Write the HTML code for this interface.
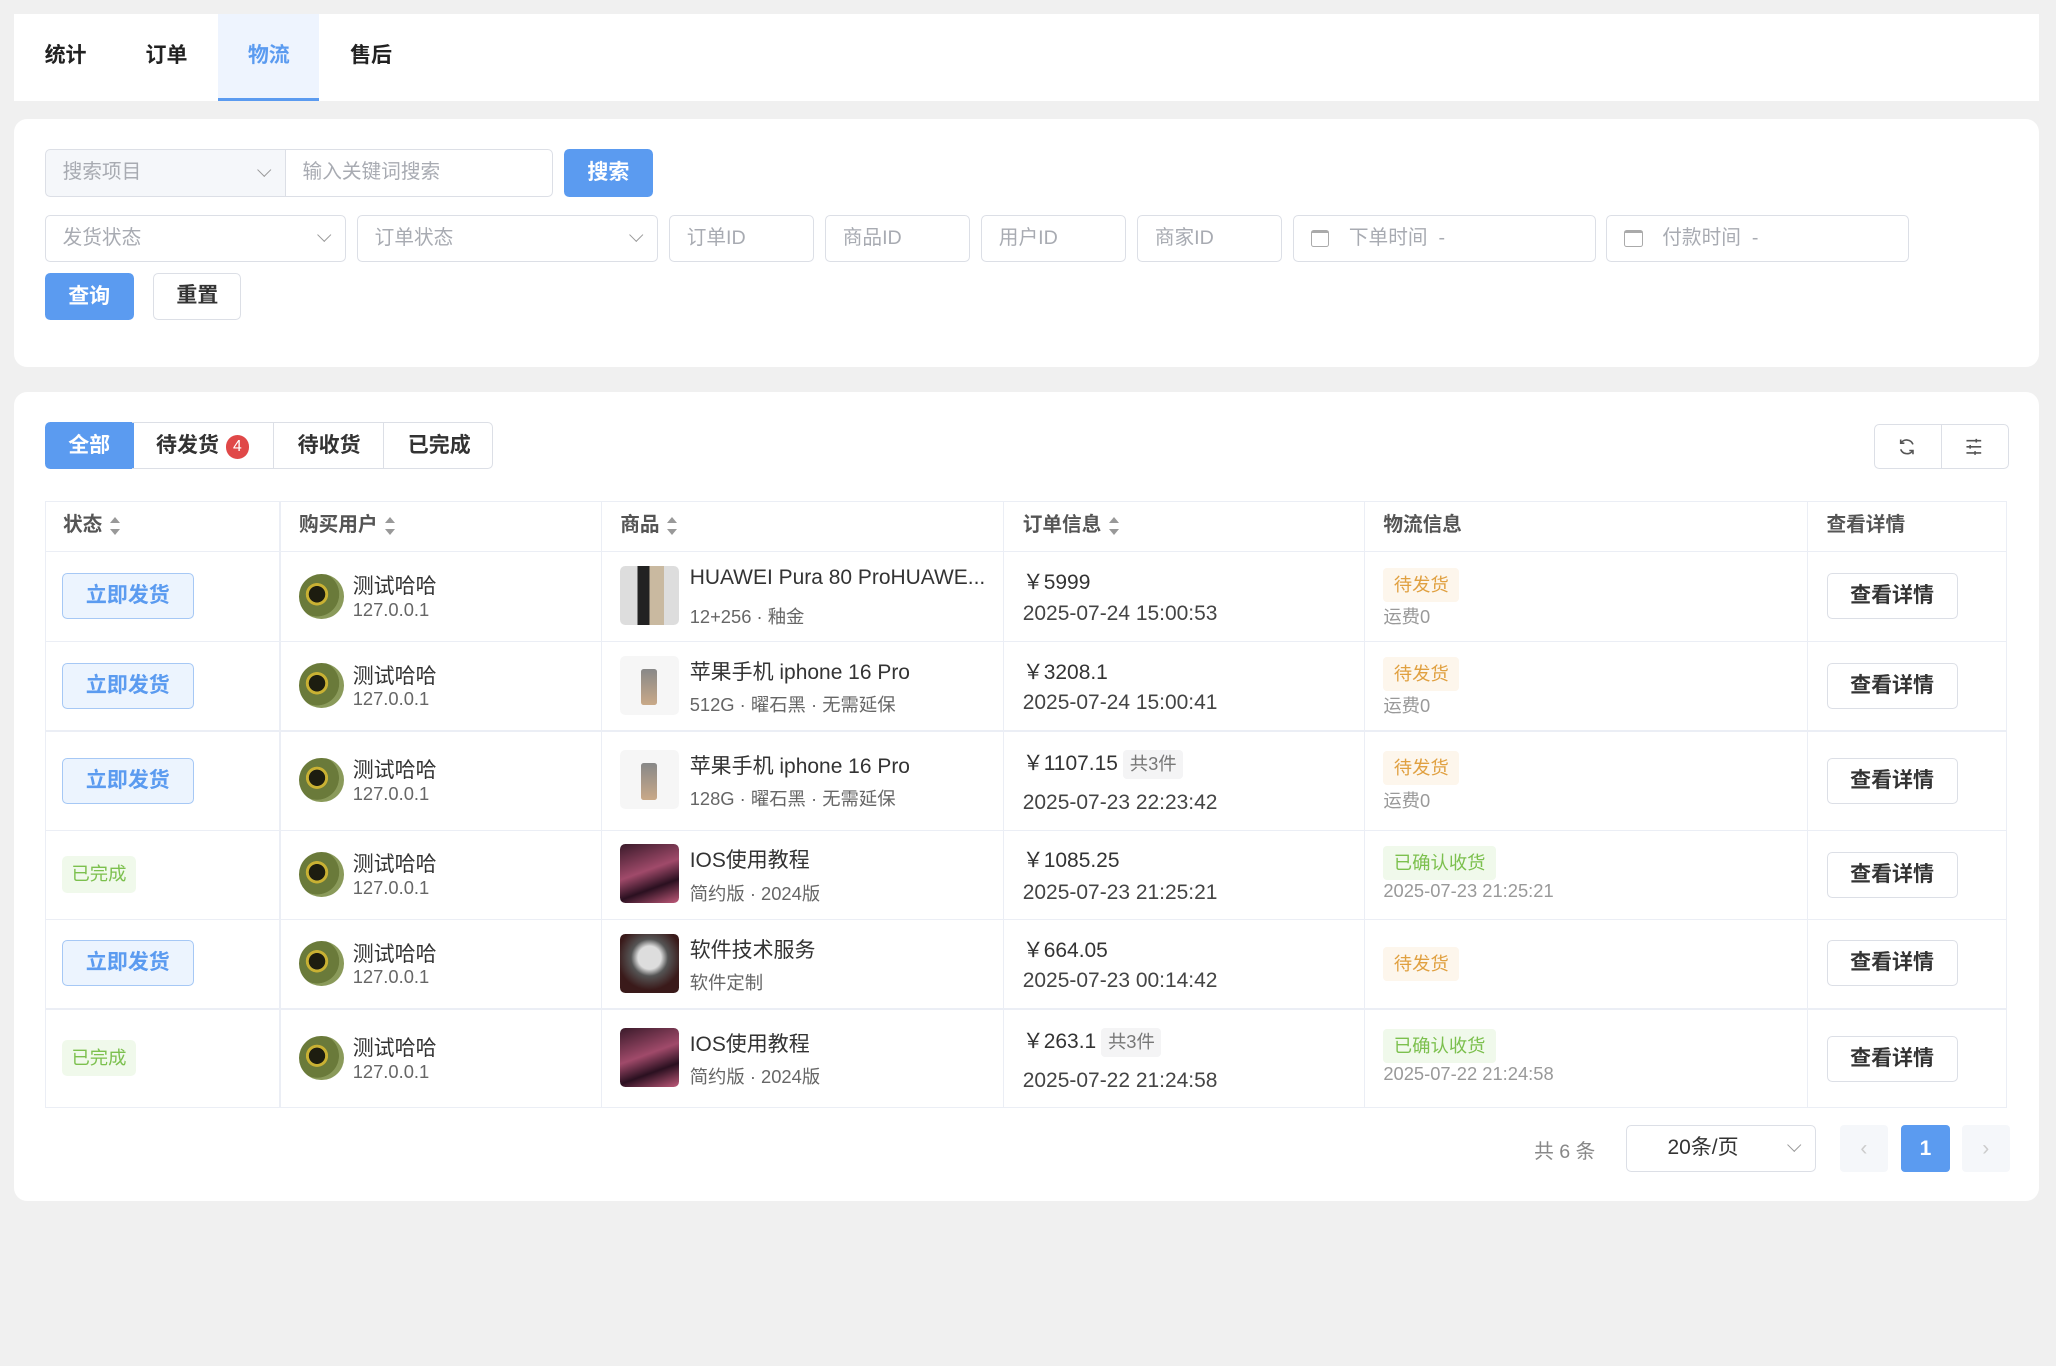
<!DOCTYPE html>
<html><head><meta charset="utf-8"><style>
*{box-sizing:border-box;margin:0;padding:0}
html,body{width:2056px;height:1366px;overflow:hidden;background:#f0f0f0}
#w{zoom:1.3112;width:1568px;height:1042px;position:relative;font-family:"Liberation Sans","Noto Sans CJK SC",sans-serif;color:#333}
.a{position:absolute}
.card{position:absolute;background:#fff;left:11px;width:1544px;border-radius:10px}
.tab{position:absolute;top:0;height:66px;line-height:64px;font-size:16px;font-weight:600;color:#222}
.inp{position:absolute;height:36px;border:1px solid #dcdfe6;border-radius:4px;font-size:15px;color:#a8abb2;line-height:34px;padding-left:13px;background:#fff}
.chev{position:absolute;right:12px;top:11px;width:8px;height:8px;border-right:1.3px solid #999;border-bottom:1.3px solid #999;transform:rotate(45deg)}
.btnp{position:absolute;background:#5b9bf0;color:#fff;border-radius:4px;font-size:16px;font-weight:600;text-align:center}
.btn{position:absolute;border:1px solid #dcdfe6;background:#fff;border-radius:4px;font-size:16px;font-weight:600;text-align:center;color:#333}
.th{position:absolute;top:382px;height:39px;line-height:38px;font-size:15px;font-weight:600;color:#555}
.sort{display:inline-block;vertical-align:middle;margin-left:6px;width:9px;height:14px;position:relative}
.sort:before{content:"";position:absolute;left:0;top:0;border:4.5px solid transparent;border-bottom:5px solid #999;border-top:0}
.sort:after{content:"";position:absolute;left:0;bottom:0;border:4.5px solid transparent;border-top:5px solid #999;border-bottom:0}
.hl{position:absolute;left:34px;width:1497px;height:1px;background:#ebeef5}
.vl{position:absolute;top:382px;height:463px;width:1px;background:#ebeef5}
.ship{position:absolute;left:47px;width:101px;height:35px;border:1px solid #a6c8f5;background:#ecf4fe;color:#5b9bf0;border-radius:4px;font-size:16px;font-weight:600;text-align:center;line-height:33px}
.done{position:absolute;left:47px;width:57px;height:28px;background:#f0f9eb;color:#7cc04e;border-radius:4px;font-size:14px;text-align:center;line-height:28px}
.av{position:absolute;left:228px;width:34px;height:34px;border-radius:50%;background:radial-gradient(circle at 40% 45%,#1d1d10 0 22%,#c9b133 23% 30%,#6a7a3a 31% 60%,#8a9a5a 61%)}
.un{position:absolute;left:269px;font-size:16px;color:#333}
.ip{position:absolute;left:269px;font-size:14px;color:#666}
.img{position:absolute;left:473px;width:45px;height:45px;border-radius:4px}
.pn{position:absolute;left:526px;font-size:16px;color:#333;white-space:nowrap}
.ps{position:absolute;left:526px;font-size:14px;color:#666;white-space:nowrap}
.pr{position:absolute;left:780px;font-size:16px;color:#333}
.cnt{display:inline-block;background:#f4f4f5;color:#777;font-size:14px;padding:0 5px;margin-left:4px;border-radius:3px;line-height:22px}
.dt{position:absolute;left:780px;font-size:16px;color:#444}
.tw{position:absolute;left:1055px;height:26px;line-height:26px;background:#fdf6ec;color:#e0a040;font-size:14px;padding:0 8px;border-radius:3px}
.tg{position:absolute;left:1055px;height:26px;line-height:26px;background:#f0f9eb;color:#7cc04e;font-size:14px;padding:0 8px;border-radius:3px}
.fs{position:absolute;left:1055px;font-size:14px;color:#999}
.det{position:absolute;left:1393px;width:100px;height:35px;border:1px solid #dcdfe6;border-radius:4px;font-size:16px;font-weight:600;text-align:center;line-height:33px;color:#333;background:#fff}
</style></head><body><div id="w">
<div class="card" style="top:11px;height:66px;border-radius:0">
<div class="tab" style="left:23px">统计</div>
<div class="tab" style="left:100px">订单</div>
<div class="a" style="left:155px;top:0;width:77px;height:66px;background:#eef4fe;border-bottom:3px solid #5b9bf0"></div>
<div class="tab" style="left:178px;color:#5b9bf0">物流</div>
<div class="tab" style="left:256px">售后</div>
</div>
<div class="card" style="top:91px;height:189px"></div>
<div class="inp" style="left:34px;top:114px;width:184px;background:#f5f7fa;border-radius:4px 0 0 4px">搜索项目<span class="chev"></span></div>
<div class="inp" style="left:217px;top:114px;width:205px;border-radius:0 4px 4px 0">输入关键词搜索</div>
<div class="btnp" style="left:430px;top:114px;width:68px;height:36px;line-height:36px">搜索</div>
<div class="inp" style="left:34px;top:164px;width:230px">发货状态<span class="chev"></span></div>
<div class="inp" style="left:272px;top:164px;width:230px">订单状态<span class="chev"></span></div>
<div class="inp" style="left:510px;top:164px;width:111px">订单ID</div>
<div class="inp" style="left:629px;top:164px;width:111px">商品ID</div>
<div class="inp" style="left:748px;top:164px;width:111px">用户ID</div>
<div class="inp" style="left:867px;top:164px;width:111px">商家ID</div>
<div class="inp" style="left:986px;top:164px;width:231px;padding-left:42px"><span class="a" style="left:13px;top:11px;width:14px;height:13px;border:1px solid #aaa;border-top-width:3px;border-radius:2px"></span>下单时间 &nbsp;-</div>
<div class="inp" style="left:1225px;top:164px;width:231px;padding-left:42px"><span class="a" style="left:13px;top:11px;width:14px;height:13px;border:1px solid #aaa;border-top-width:3px;border-radius:2px"></span>付款时间 &nbsp;-</div>
<div class="btnp" style="left:34px;top:208px;width:68px;height:36px;line-height:36px">查询</div>
<div class="btn" style="left:117px;top:208px;width:67px;height:36px;line-height:34px">重置</div>

<div class="card" style="top:299px;height:617px"></div>
<div class="btnp" style="left:34px;top:322px;width:68px;height:36px;line-height:36px;border-radius:4px 0 0 4px">全部</div>
<div class="a" style="left:101px;top:322px;width:275px;height:36px;border:1px solid #dcdfe6;border-left:0;border-radius:0 4px 4px 0"></div>
<div class="a" style="left:208px;top:322px;width:1px;height:36px;background:#dcdfe6"></div>
<div class="a" style="left:292px;top:322px;width:1px;height:36px;background:#dcdfe6"></div>
<div class="a" style="left:119px;top:322px;line-height:36px;font-size:16px;font-weight:600">待发货</div>
<div class="a" style="left:172px;top:332px;width:18px;height:18px;border-radius:9px;background:#e04848;color:#fff;font-size:12px;text-align:center;line-height:18px">4</div>
<div class="a" style="left:227px;top:322px;line-height:36px;font-size:16px;font-weight:600">待收货</div>
<div class="a" style="left:311px;top:322px;line-height:36px;font-size:16px;font-weight:600">已完成</div>
<div class="a" style="left:1429px;top:323px;width:103px;height:35px;border:1px solid #dcdfe6;border-radius:4px"></div>
<div class="a" style="left:1480px;top:323px;width:1px;height:35px;background:#dcdfe6"></div>
<svg class="a" style="left:1447px;top:333px" width="15" height="15" viewBox="0 0 16 16" fill="none" stroke="#555" stroke-width="1.3"><path d="M13 6A5.5 5.5 0 0 0 3.2 5M3 10a5.5 5.5 0 0 0 9.8 1"/><path d="M3 2v3h3M13 14v-3h-3"/></svg>
<svg class="a" style="left:1498px;top:333px" width="15" height="15" viewBox="0 0 16 16" fill="none" stroke="#555" stroke-width="1.3"><path d="M2 3h12M2 8h12M2 13h12M10 1.5v3M5 6.5v3M9 11.5v3"/></svg>

<div class="a" style="left:34px;top:382px;width:1497px;height:463px;border:1px solid #ebeef5"></div>
<div class="vl" style="left:213px"></div><div class="vl" style="left:458px"></div><div class="vl" style="left:765px"></div><div class="vl" style="left:1040px"></div><div class="vl" style="left:1378px"></div>
<div class="hl" style="top:420px"></div><div class="hl" style="top:489px"></div><div class="hl" style="top:557px"></div><div class="hl" style="top:633px"></div><div class="hl" style="top:701px"></div><div class="hl" style="top:769px"></div>
<div class="th" style="left:48px">状态<span class="sort"></span></div>
<div class="th" style="left:228px">购买用户<span class="sort"></span></div>
<div class="th" style="left:473px">商品<span class="sort"></span></div>
<div class="th" style="left:780px">订单信息<span class="sort"></span></div>
<div class="th" style="left:1055px">物流信息</div>
<div class="th" style="left:1393px">查看详情</div>

<!-- row1 -->
<div class="ship" style="top:437px">立即发货</div>
<div class="av" style="top:438px"></div><div class="un" style="top:435px">测试哈哈</div><div class="ip" style="top:457px">127.0.0.1</div>
<div class="img" style="top:432px;background:linear-gradient(90deg,#ddd 0 30%,#222 30% 50%,#c9b9a0 50% 75%,#ddd 75%)"></div>
<div class="pn" style="top:432px">HUAWEI Pura 80 ProHUAWE...</div><div class="ps" style="top:460px">12+256 · 釉金</div>
<div class="pr" style="top:432px">￥5999</div><div class="dt" style="top:459px">2025-07-24 15:00:53</div>
<div class="tw" style="top:433px">待发货</div><div class="fs" style="top:460px">运费0</div>
<div class="det" style="top:437px">查看详情</div>
<!-- row2 -->
<div class="ship" style="top:506px">立即发货</div>
<div class="av" style="top:506px"></div><div class="un" style="top:503px">测试哈哈</div><div class="ip" style="top:525px">127.0.0.1</div>
<div class="img" style="top:500px;background:#f6f6f6"><div class="a" style="left:16px;top:10px;width:12px;height:28px;border-radius:2px;background:linear-gradient(#888,#c9a988)"></div></div>
<div class="pn" style="top:500px">苹果手机 iphone 16 Pro</div><div class="ps" style="top:527px">512G · 曜石黑 · 无需延保</div>
<div class="pr" style="top:500px">￥3208.1</div><div class="dt" style="top:527px">2025-07-24 15:00:41</div>
<div class="tw" style="top:501px">待发货</div><div class="fs" style="top:528px">运费0</div>
<div class="det" style="top:506px">查看详情</div>
<!-- row3 -->
<div class="ship" style="top:578px">立即发货</div>
<div class="av" style="top:578px"></div><div class="un" style="top:575px">测试哈哈</div><div class="ip" style="top:597px">127.0.0.1</div>
<div class="img" style="top:572px;background:#f6f6f6"><div class="a" style="left:16px;top:10px;width:12px;height:28px;border-radius:2px;background:linear-gradient(#888,#c9a988)"></div></div>
<div class="pn" style="top:572px">苹果手机 iphone 16 Pro</div><div class="ps" style="top:599px">128G · 曜石黑 · 无需延保</div>
<div class="pr" style="top:570px">￥1107.15<span class="cnt">共3件</span></div><div class="dt" style="top:603px">2025-07-23 22:23:42</div>
<div class="tw" style="top:573px">待发货</div><div class="fs" style="top:600px">运费0</div>
<div class="det" style="top:578px">查看详情</div>
<!-- row4 -->
<div class="done" style="top:653px">已完成</div>
<div class="av" style="top:650px"></div><div class="un" style="top:647px">测试哈哈</div><div class="ip" style="top:669px">127.0.0.1</div>
<div class="img" style="top:644px;background:linear-gradient(160deg,#3a1a2a,#a04a6a 45%,#2a1020 70%,#c05a7a)"></div>
<div class="pn" style="top:644px">IOS使用教程</div><div class="ps" style="top:671px">简约版 · 2024版</div>
<div class="pr" style="top:644px">￥1085.25</div><div class="dt" style="top:672px">2025-07-23 21:25:21</div>
<div class="tg" style="top:645px">已确认收货</div><div class="fs" style="top:671px">2025-07-23 21:25:21</div>
<div class="det" style="top:650px">查看详情</div>
<!-- row5 -->
<div class="ship" style="top:717px">立即发货</div>
<div class="av" style="top:718px"></div><div class="un" style="top:715px">测试哈哈</div><div class="ip" style="top:737px">127.0.0.1</div>
<div class="img" style="top:712px;background:radial-gradient(circle at 50% 40%,#ddd 0 25%,#555 40%,#3a1a1a 70%)"></div>
<div class="pn" style="top:712px">软件技术服务</div><div class="ps" style="top:739px">软件定制</div>
<div class="pr" style="top:712px">￥664.05</div><div class="dt" style="top:739px">2025-07-23 00:14:42</div>
<div class="tw" style="top:722px">待发货</div>
<div class="det" style="top:717px">查看详情</div>
<!-- row6 -->
<div class="done" style="top:793px">已完成</div>
<div class="av" style="top:790px"></div><div class="un" style="top:787px">测试哈哈</div><div class="ip" style="top:809px">127.0.0.1</div>
<div class="img" style="top:784px;background:linear-gradient(160deg,#3a1a2a,#a04a6a 45%,#2a1020 70%,#c05a7a)"></div>
<div class="pn" style="top:784px">IOS使用教程</div><div class="ps" style="top:811px">简约版 · 2024版</div>
<div class="pr" style="top:782px">￥263.1<span class="cnt">共3件</span></div><div class="dt" style="top:815px">2025-07-22 21:24:58</div>
<div class="tg" style="top:785px">已确认收货</div><div class="fs" style="top:811px">2025-07-22 21:24:58</div>
<div class="det" style="top:790px">查看详情</div>

<div class="a" style="left:1170px;top:866px;font-size:15px;color:#888">共 6 条</div>
<div class="inp" style="left:1240px;top:858px;width:145px;color:#333;font-size:16px;padding-left:31px">20条/页<span class="chev"></span></div>
<div class="a" style="left:1403px;top:858px;width:37px;height:36px;background:#f5f7fa;border-radius:3px;color:#ccc;text-align:center;line-height:36px">‹</div>
<div class="btnp" style="left:1450px;top:858px;width:37px;height:36px;line-height:36px;border-radius:3px">1</div>
<div class="a" style="left:1496px;top:858px;width:37px;height:36px;background:#f5f7fa;border-radius:3px;color:#ccc;text-align:center;line-height:36px">›</div>
</div></body></html>
